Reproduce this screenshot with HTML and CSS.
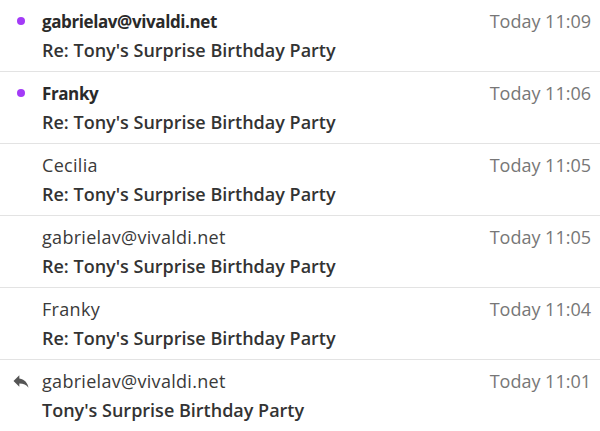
FILE: index.html
```html
<!DOCTYPE html>
<html>
<head>
<meta charset="utf-8">
<link rel="stylesheet" href="styles.css">
</head>
<body>
<div class="list">
  <div class="row unread">
    <div class="mark"><span class="dot"></span></div>
    <div class="content">
      <div class="top"><span class="sender">gabrielav@vivaldi.net</span><span class="time">Today 11:09</span></div>
      <div class="subject">Re: Tony's Surprise Birthday Party</div>
    </div>
  </div>
  <div class="row unread">
    <div class="mark"><span class="dot"></span></div>
    <div class="content">
      <div class="top"><span class="sender">Franky</span><span class="time">Today 11:06</span></div>
      <div class="subject">Re: Tony's Surprise Birthday Party</div>
    </div>
  </div>
  <div class="row">
    <div class="mark"></div>
    <div class="content">
      <div class="top"><span class="sender">Cecilia</span><span class="time">Today 11:05</span></div>
      <div class="subject">Re: Tony's Surprise Birthday Party</div>
    </div>
  </div>
  <div class="row">
    <div class="mark"></div>
    <div class="content">
      <div class="top"><span class="sender">gabrielav@vivaldi.net</span><span class="time">Today 11:05</span></div>
      <div class="subject">Re: Tony's Surprise Birthday Party</div>
    </div>
  </div>
  <div class="row">
    <div class="mark"></div>
    <div class="content">
      <div class="top"><span class="sender">Franky</span><span class="time">Today 11:04</span></div>
      <div class="subject">Re: Tony's Surprise Birthday Party</div>
    </div>
  </div>
  <div class="row last">
    <div class="mark"><svg class="reply" viewBox="0 0 24 24" width="20" height="20"><path d="M10 9V5l-7 7 7 7v-4.1c5 0 8.5 1.6 11 5.1-1-5-4-10-11-11z" fill="#555"/></svg></div>
    <div class="content">
      <div class="top"><span class="sender">gabrielav@vivaldi.net</span><span class="time">Today 11:01</span></div>
      <div class="subject">Tony's Surprise Birthday Party</div>
    </div>
  </div>
</div>
</body>
</html>
```
FILE: styles.css
```css
html, body {
  margin: 0;
  padding: 0;
  background: #fff;
}
body {
  font-family: "Open Sans", "Noto Sans", sans-serif;
  font-size: 18px;
  color: #333;
  width: 600px;
  height: 431px;
  overflow: hidden;
}
.list {
  display: flex;
  flex-direction: column;
}
.row {
  display: flex;
  height: 72px;
  box-sizing: border-box;
  border-bottom: 1px solid #e3e3e3;
  padding-top: 7px;
}
.row.last {
  border-bottom: none;
}
.mark {
  width: 42px;
  flex: none;
  display: flex;
  justify-content: center;
  align-items: flex-start;
  padding-top: 10px;
  box-sizing: border-box;
}
.dot {
  width: 8px;
  height: 8px;
  border-radius: 50%;
  background: #a33bf7;
}
.reply {
  margin-top: -6px;
}
.content {
  flex: 1;
  padding-right: 9px;
  min-width: 0;
}
.top {
  display: flex;
  justify-content: space-between;
  align-items: baseline;
  line-height: 29px;
}
.sender {
  color: #3a3a3a;
  letter-spacing: 0.3px;
}
.unread .sender {
  font-weight: 700;
  font-size: 17px;
  color: #2a2a2a;
  letter-spacing: -0.4px;
}
.time {
  color: #777;
}
.subject {
  line-height: 29px;
  font-weight: 600;
  color: #333;
}
```
